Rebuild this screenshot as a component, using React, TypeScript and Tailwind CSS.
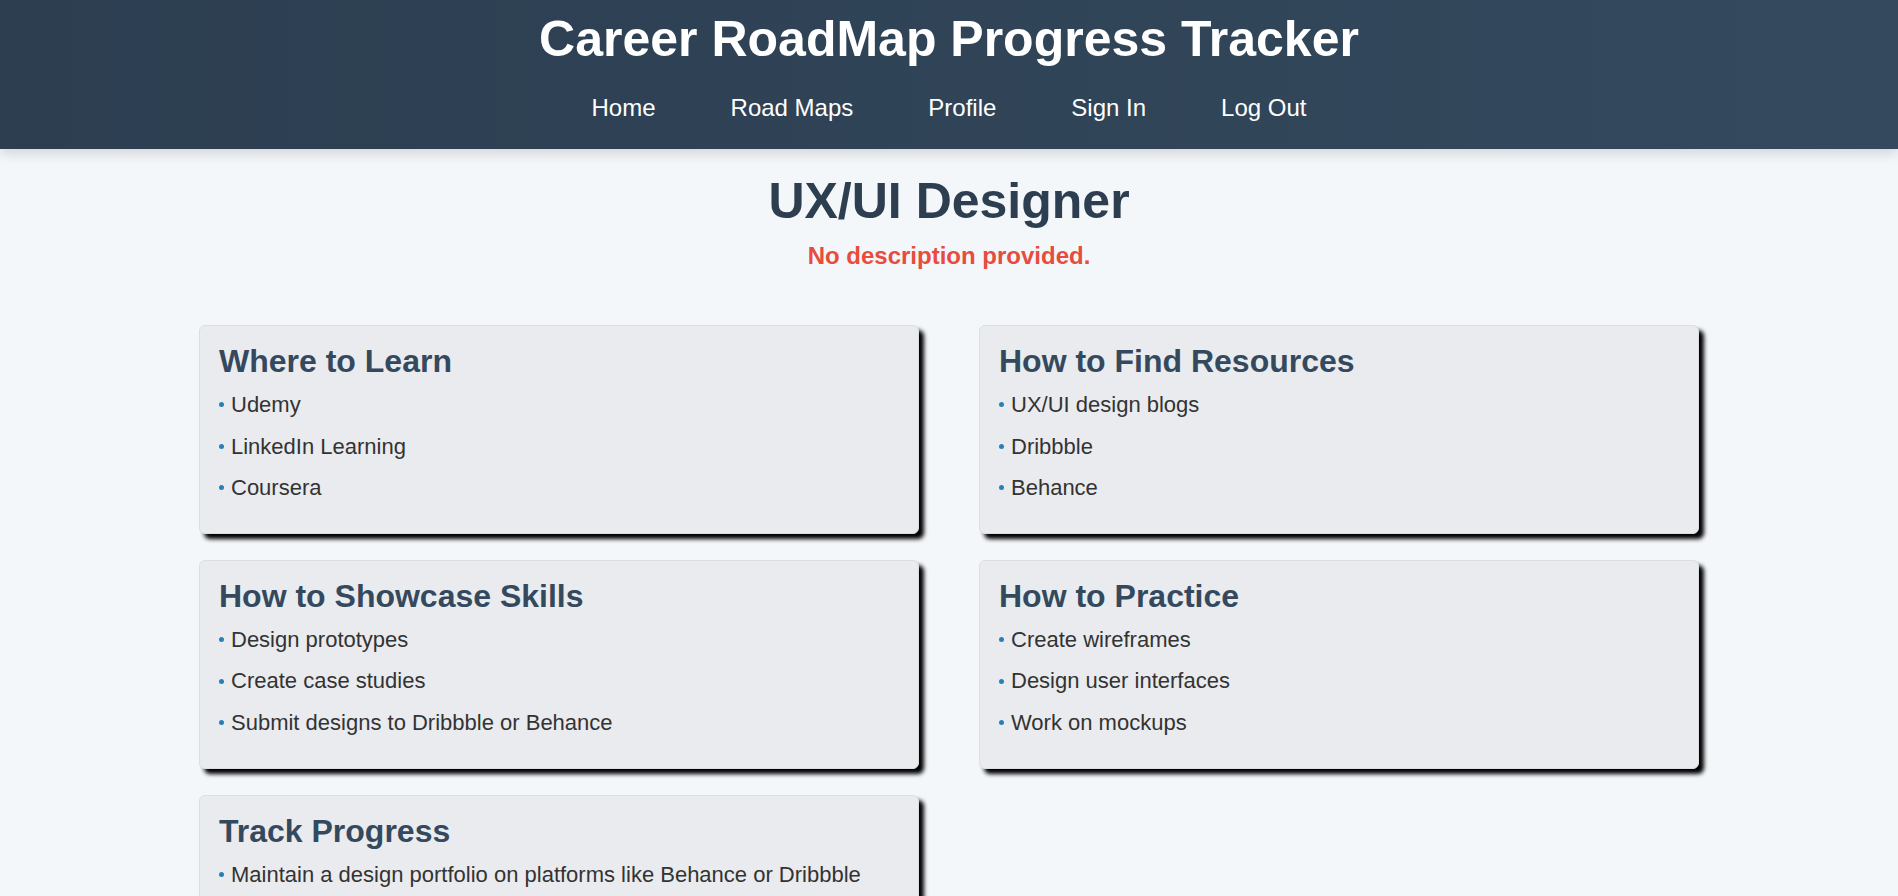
import React from "react";

const sections = [
  {
    title: "Where to Learn",
    items: ["Udemy", "LinkedIn Learning", "Coursera"],
  },
  {
    title: "How to Find Resources",
    items: ["UX/UI design blogs", "Dribbble", "Behance"],
  },
  {
    title: "How to Showcase Skills",
    items: [
      "Design prototypes",
      "Create case studies",
      "Submit designs to Dribbble or Behance",
    ],
  },
  {
    title: "How to Practice",
    items: ["Create wireframes", "Design user interfaces", "Work on mockups"],
  },
  {
    title: "Track Progress",
    items: [
      "Maintain a design portfolio on platforms like Behance or Dribbble",
      "Collect feedback from peers",
      "Set monthly design goals",
    ],
  },
];

const navLinks = ["Home", "Road Maps", "Profile", "Sign In", "Log Out"];

const App = () => {
  return (
    <div className="min-h-screen bg-[#f4f7fa] font-['Liberation_Sans',Arial,sans-serif]">
      <header className="relative z-10 bg-gradient-to-r from-[#2c3e50] to-[#34495e] pt-[9px] pb-[27px] shadow-[0_4px_12px_rgba(0,0,0,0.15)]">
        <h1 className="text-center text-[50px] font-bold leading-[60px] text-white">
          Career RoadMap Progress Tracker
        </h1>
        <nav className="mt-[25px] flex justify-center gap-[75px]">
          {navLinks.map((link) => (
            <a
              key={link}
              href="#"
              className="text-[24px] leading-[28px] text-white"
            >
              {link}
            </a>
          ))}
        </nav>
      </header>

      <main className="pt-[22px] pb-10">
        <h2 className="text-center text-[50px] font-bold leading-[60px] text-[#2c3e50]">
          UX/UI Designer
        </h2>
        <p className="mt-[11px] text-center text-[24px] font-bold leading-[28px] text-[#e74c3c]">
          No description provided.
        </p>

        <div className="mx-auto mt-[55px] grid max-w-[1500px] grid-cols-2 gap-x-[60px] gap-y-[26px]">
          {sections.map((section) => (
            <div
              key={section.title}
              className="rounded-md border border-[#dcdee2] bg-[#e9ebee] px-[19px] pt-[17px] pb-[24px] shadow-[5px_5px_4px_#000]"
            >
              <h3 className="mb-[5px] text-[32px] font-bold leading-[36px] text-[#34495e]">
                {section.title}
              </h3>
              <ul>
                {section.items.map((item) => (
                  <li
                    key={item}
                    className="flex items-center py-2 text-[22px] leading-[25.6px] text-[#333]"
                  >
                    <span className="mr-[7px] inline-block h-[5px] w-[5px] rounded-full bg-[#2980b9]" />
                    {item}
                  </li>
                ))}
              </ul>
            </div>
          ))}
        </div>
      </main>
    </div>
  );
};

export default App;
